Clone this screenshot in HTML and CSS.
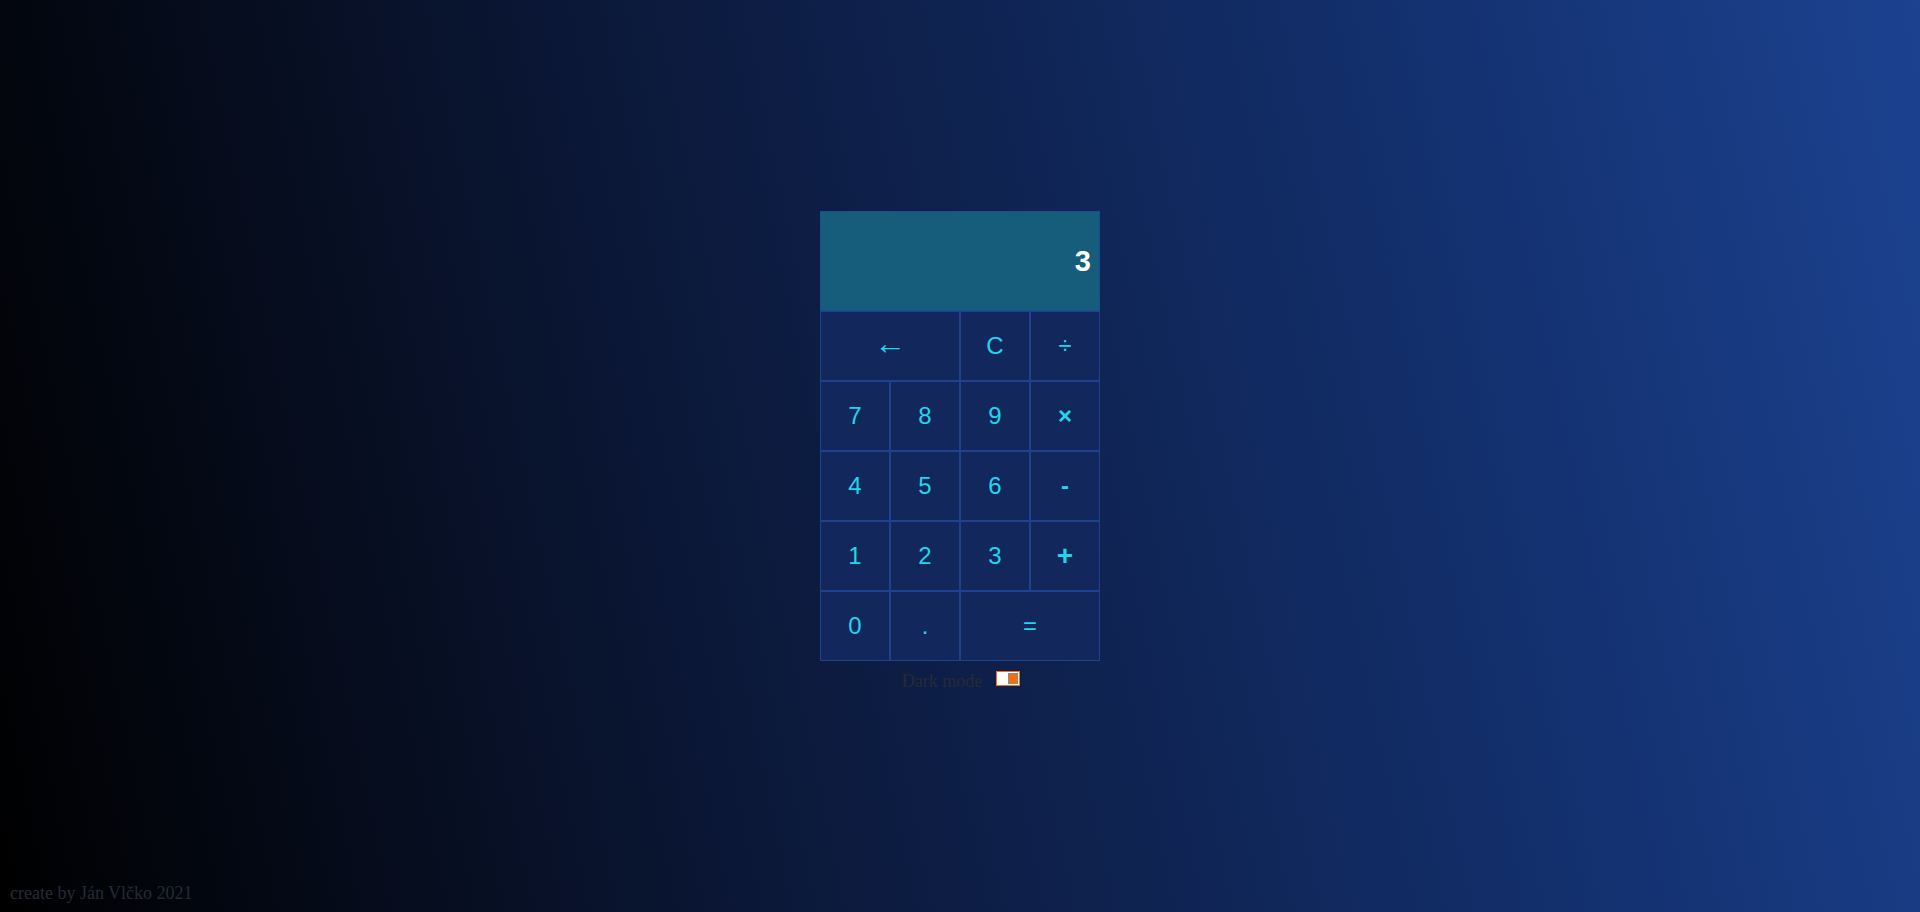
FILE: index.html
```html
<!DOCTYPE html>
<html lang="sk">
<head>
<meta charset="utf-8">
<title>Calculator</title>
<link rel="stylesheet" href="styles.css">
</head>
<body>
<main class="page">
  <div class="calc">
    <div class="display">3</div>
    <div class="keys">
      <button class="key wide arrow">←</button>
      <button class="key">C</button>
      <button class="key">÷</button>
      <button class="key">7</button>
      <button class="key">8</button>
      <button class="key">9</button>
      <button class="key op">×</button>
      <button class="key">4</button>
      <button class="key">5</button>
      <button class="key">6</button>
      <button class="key op">-</button>
      <button class="key">1</button>
      <button class="key">2</button>
      <button class="key">3</button>
      <button class="key op plus">+</button>
      <button class="key">0</button>
      <button class="key">.</button>
      <button class="key wide">=</button>
    </div>
  </div>
  <div class="mode">
    <span class="mode-label">Dark mode</span>
    <span class="toggle"><span class="knob"></span></span>
  </div>
</main>
<footer class="credit">create by Ján Vlčko 2021</footer>
</body>
</html>
```
FILE: styles.css
```css
html, body {
  margin: 0;
  height: 100%;
}
body {
  background: linear-gradient(78deg, #000000 0%, #0c1a3d 40%, #13306e 75%, #1c4290 100%);
  font-family: "Liberation Serif", serif;
  position: relative;
  overflow: hidden;
}
.page {
  display: flex;
  flex-direction: column;
  align-items: center;
  padding-top: 211px;
}
.calc {
  width: 280px;
  display: flex;
  flex-direction: column;
}
.display {
  box-sizing: border-box;
  height: 100px;
  background: #155d7b;
  border: 1px solid #1f4a94;
  color: #ffffff;
  font-family: "Liberation Sans", Arial, sans-serif;
  font-weight: bold;
  font-size: 29px;
  display: flex;
  align-items: center;
  justify-content: flex-end;
  padding-right: 8px;
}
.keys {
  display: grid;
  grid-template-columns: repeat(4, 70px);
  grid-auto-rows: 70px;
}
.key {
  box-sizing: border-box;
  margin: 0;
  background: #12285c;
  border: 1px solid #1e4190;
  color: #22d5ec;
  font-family: "Liberation Sans", Arial, sans-serif;
  font-size: 24px;
  padding: 0;
  cursor: pointer;
}
.key.op {
  font-weight: bold;
}
.key.plus {
  font-size: 28px;
}
.key.arrow {
  font-size: 32px;
  padding-bottom: 6px;
}
.key.wide {
  grid-column: span 2;
}
.mode {
  display: flex;
  align-items: center;
  gap: 14px;
  margin-top: 10px;
  margin-left: 2px;
}
.mode-label {
  color: #262a36;
  font-size: 18px;
}
.toggle {
  box-sizing: border-box;
  width: 24px;
  height: 15px;
  background: #ffffff;
  border: 1px solid #ff6a13;
  display: flex;
  justify-content: flex-end;
  align-items: center;
  padding: 1px;
  margin-top: -6px;
}
.knob {
  box-sizing: border-box;
  width: 10px;
  height: 11px;
  background: #ff6a0c;
  border: 1px solid #8a8a8a;
}
.credit {
  position: absolute;
  left: 10px;
  bottom: 8px;
  color: #262a36;
  font-size: 18px;
}
```
